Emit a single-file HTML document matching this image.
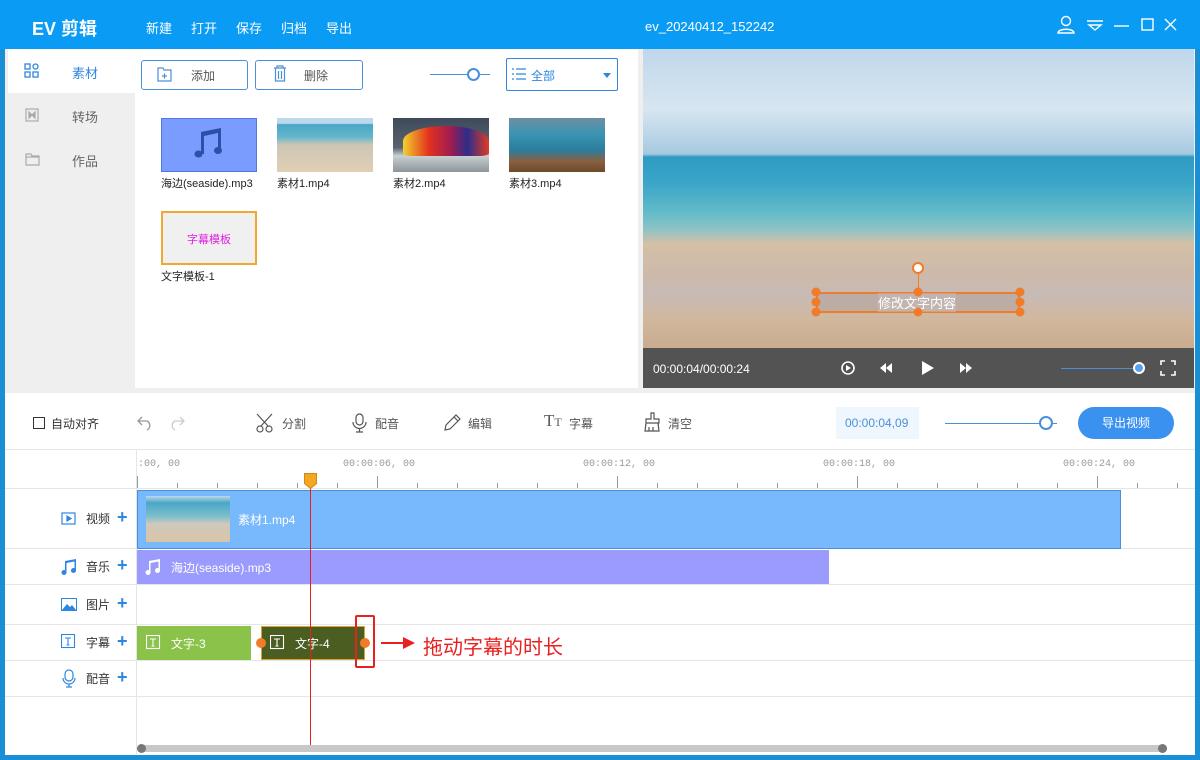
<!DOCTYPE html>
<html><head><meta charset="utf-8"><style>
*{margin:0;padding:0;box-sizing:border-box}
body{width:1200px;height:760px;position:relative;overflow:hidden;background:#1a8fd6;font-family:"Liberation Sans","Noto Sans CJK SC",sans-serif;font-size:12px;color:#333}
.a{position:absolute}
.tb{color:#fff;font-size:13px}
.btn{border:1px solid #4a90d9;border-radius:3px;background:#fff;color:#555;font-size:12px}
.tool{color:#555;font-size:12px}
.lbl{font-size:12px;color:#333}
.plus{color:#2e86de;font-size:18px;font-weight:bold}
.hl{height:1px;background:#e6e6e6}
</style></head><body>
<div class="a" style="left:0;top:0;width:1200px;height:49px;background:#0a9cf5"></div>
<div class="a tb" style="left:32px;top:15px;font-size:18px;font-weight:bold">EV 剪辑</div>
<div class="a tb" style="left:146px;top:18px">新建</div>
<div class="a tb" style="left:191px;top:18px">打开</div>
<div class="a tb" style="left:236px;top:18px">保存</div>
<div class="a tb" style="left:281px;top:18px">归档</div>
<div class="a tb" style="left:326px;top:18px">导出</div>
<div class="a tb" style="left:645px;top:19px;font-size:13px">ev_20240412_152242</div>
<svg class="a" style="left:1050px;top:15px" width="140" height="22" fill="none" stroke="#fff" stroke-width="1.4">
<circle cx="16" cy="6" r="4.5"/><path d="M8 18c0-5 16-5 16 0z"/>
<path d="M37 6h16M39 10h12l-6 5z"/>
<path d="M64 11h15"/>
<rect x="92" y="4" width="11" height="11"/>
<path d="M115 4l11 11M126 4l-11 11"/></svg>
<div class="a" style="left:5px;top:49px;width:1190px;height:706px;background:#efefef"></div>
<div class="a" style="left:8px;top:49px;width:127px;height:44px;background:#fff"></div>
<svg class="a" style="left:24px;top:63px" width="18" height="16" fill="none" stroke="#2e86de" stroke-width="1.3"><rect x="1" y="1" width="5" height="5"/><rect x="1" y="9" width="5" height="5"/><rect x="9" y="9" width="5" height="5"/><circle cx="11.5" cy="3.5" r="2.5"/></svg>
<div class="a" style="left:72px;top:63px;color:#2e86de;font-size:13px">素材</div>
<svg class="a" style="left:25px;top:108px" width="16" height="14" fill="none" stroke="#aaa" stroke-width="1.2"><rect x="1" y="1" width="12" height="12"/><path d="M4 4l3 3-3 3zM10 4l-3 3 3 3z" fill="#aaa"/></svg>
<div class="a" style="left:72px;top:107px;color:#666;font-size:13px">转场</div>
<svg class="a" style="left:25px;top:152px" width="16" height="14" fill="none" stroke="#aaa" stroke-width="1.2"><path d="M1 2h5l1 2h7v9H1z M1 5h13"/></svg>
<div class="a" style="left:72px;top:151px;color:#666;font-size:13px">作品</div>
<div class="a" style="left:135px;top:49px;width:503px;height:339px;background:#fff"></div>
<div class="a btn" style="left:141px;top:60px;width:107px;height:30px"></div>
<svg class="a" style="left:157px;top:67px" width="16" height="15" fill="none" stroke="#4a90d9" stroke-width="1.2"><path d="M1 1h5l1 2h7v11H1z M5 9h5M7.5 6.5v5"/></svg>
<div class="a" style="left:191px;top:67px;color:#555">添加</div>
<div class="a btn" style="left:255px;top:60px;width:108px;height:30px"></div>
<svg class="a" style="left:273px;top:65px" width="14" height="17" fill="none" stroke="#4a90d9" stroke-width="1.2"><path d="M1 3h12M4 3V1h6v2M2.5 3v13h9V3M5.5 6v8M8.5 6v8"/></svg>
<div class="a" style="left:304px;top:67px;color:#555">删除</div>
<div class="a" style="left:430px;top:74px;width:60px;height:1px;background:#4a90d9"></div>
<div class="a" style="left:467px;top:68px;width:13px;height:13px;border:2px solid #4a90d9;border-radius:50%;background:#fff"></div>
<div class="a" style="left:506px;top:58px;width:112px;height:33px;border:1px solid #2e86de;border-radius:2px;background:#fff"></div>
<svg class="a" style="left:512px;top:68px" width="14" height="12" stroke="#2e86de" stroke-width="1.2"><path d="M0 1h2M4 1h10M0 6h2M4 6h10M0 11h2M4 11h10"/></svg>
<div class="a" style="left:531px;top:67px;color:#2e86de">全部</div>
<div class="a" style="left:603px;top:73px;border:4px solid transparent;border-top:5px solid #2e86de"></div>
<div class="a" style="left:161px;top:118px;width:96px;height:54px;background:#7b9cff;border:1px solid #5577dd"></div>
<svg class="a" style="left:191px;top:128px" width="34" height="32" fill="#2f4ea8"><path d="M10 4l20-4v22h-3V5L13 8v18h-3z"/><ellipse cx="7.5" cy="26" rx="4" ry="3.5"/><ellipse cx="27" cy="22.5" rx="4" ry="3.5"/></svg>
<div class="a" style="left:161px;top:175px;color:#222;font-size:11px">海边(seaside).mp3</div>
<div class="a" style="left:277px;top:118px;width:96px;height:54px;background:linear-gradient(#bcd8ea 0%,#bcd8ea 10%,#4aa6c6 12%,#63b7cc 35%,#cfc5b5 50%,#e0cfb5 100%)"></div>
<div class="a" style="left:277px;top:175px;color:#222;font-size:11px">素材1.mp4</div>
<div class="a" style="left:393px;top:118px;width:96px;height:54px;background:linear-gradient(#3e4a5a,#5a6270 55%,#c9d0d2 70%,#8c9599)"></div>
<div class="a" style="left:403px;top:126px;width:86px;height:30px;border-radius:50% 50% 10% 10%;background:linear-gradient(90deg,#f2d12a,#e2321e 30%,#a21c50 55%,#2c2d8a 75%,#e23a24)"></div>
<div class="a" style="left:393px;top:175px;color:#222;font-size:11px">素材2.mp4</div>
<div class="a" style="left:509px;top:118px;width:96px;height:54px;background:linear-gradient(#6d8fa0,#3a94b4 30%,#2c7c9c 60%,#8a6040 80%,#6b4a2c)"></div>
<div class="a" style="left:509px;top:175px;color:#222;font-size:11px">素材3.mp4</div>
<div class="a" style="left:161px;top:211px;width:96px;height:54px;background:#f0f0f0;border:2px solid #f0a830"></div>
<div class="a" style="left:187px;top:231px;color:#e020e0;font-size:11px">字幕模板</div>
<div class="a" style="left:161px;top:268px;color:#222;font-size:11px">文字模板-1</div>
<div class="a" style="left:643px;top:49px;width:551px;height:300px;background:linear-gradient(#bfd7ea 0%,#d7e6f1 20%,#a7c9e0 35%,#2f9ac4 36%,#3ba6c8 45%,#66bcc9 55%,#8dc3c5 60%,#d4c0a6 65%,#cdb9a9 75%,#c7bbb5 82%,#d1b79e 90%,#c9ac8e 100%)"></div>
<div class="a" style="left:816px;top:292px;width:204px;height:21px;border:2px solid #f07c2a;background:rgba(160,150,150,.35)"></div>
<div class="a" style="left:878px;top:293px;color:#fff;font-size:13px;background:rgba(200,190,190,.5)">修改文字内容</div>
<div class="a" style="left:918px;top:272px;width:1px;height:20px;background:#f07c2a"></div>
<div class="a" style="left:912px;top:262px;width:12px;height:12px;border:2.5px solid #f07c2a;border-radius:50%;background:#fff"></div>
<svg class="a" style="left:808px;top:284px" width="220" height="36" fill="#f07c2a"><circle cx="8" cy="8" r="4.5"/><circle cx="8" cy="18" r="4.5"/><circle cx="8" cy="28" r="4.5"/><circle cx="110" cy="8" r="4.5"/><circle cx="110" cy="28" r="4.5"/><circle cx="212" cy="8" r="4.5"/><circle cx="212" cy="18" r="4.5"/><circle cx="212" cy="28" r="4.5"/></svg>
<div class="a" style="left:643px;top:348px;width:551px;height:40px;background:#535353"></div>
<div class="a" style="left:653px;top:362px;color:#fff;font-size:12px">00:00:04/00:00:24</div>
<svg class="a" style="left:838px;top:358px" width="150" height="20" fill="#fff" stroke="#fff"><circle cx="10" cy="10" r="6" fill="none" stroke-width="1.6"/><path d="M8 7l5 3-5 3z" stroke="none"/><path d="M42 10l6-5v10zM48 10l6-5v10z" stroke="none"/><path d="M84 3l12 7-12 7z" stroke="none"/><path d="M122 5l6 5-6 5zM128 5l6 5-6 5z" stroke="none"/></svg>
<div class="a" style="left:1061px;top:368px;width:78px;height:1px;background:#4a90d9"></div>
<div class="a" style="left:1133px;top:362px;width:12px;height:12px;border-radius:50%;background:#5aa0f0;border:2px solid #fff"></div>
<svg class="a" style="left:1160px;top:360px" width="16" height="16" fill="none" stroke="#fff" stroke-width="1.6"><path d="M1 5V1h4M11 1h4v4M15 11v4h-4M5 15H1v-4"/></svg>
<div class="a" style="left:5px;top:393px;width:1190px;height:362px;background:#fff"></div>
<div class="a" style="left:33px;top:417px;width:12px;height:12px;border:1px solid #333"></div>
<div class="a lbl" style="left:51px;top:415px">自动对齐</div>
<svg class="a" style="left:136px;top:413px" width="60" height="20" fill="none" stroke="#999" stroke-width="1.3"><path d="M6 4L2 8l4 4M2 8h9a5 5 0 010 9"/><path d="M44 4l4 4-4 4M48 8h-9a5 5 0 000 9" stroke="#ccc"/></svg>
<svg class="a" style="left:256px;top:413px" width="20" height="20" fill="none" stroke="#555" stroke-width="1.2"><circle cx="4" cy="16" r="3"/><circle cx="13" cy="16" r="3"/><path d="M5 13L16 1M12 13L1 1"/></svg>
<div class="a tool" style="left:282px;top:415px">分割</div>
<svg class="a" style="left:352px;top:413px" width="16" height="20" fill="none" stroke="#555" stroke-width="1.2"><rect x="4" y="1" width="7" height="11" rx="3.5"/><path d="M1 9a6.5 6.5 0 0013 0M7.5 15v4M4 19h7"/></svg>
<div class="a tool" style="left:375px;top:415px">配音</div>
<svg class="a" style="left:442px;top:413px" width="20" height="20" fill="none" stroke="#555" stroke-width="1.2"><path d="M3 17l1-5L14 2l4 4L8 16zM12 4l4 4"/></svg>
<div class="a tool" style="left:468px;top:415px">编辑</div>
<div class="a" style="left:544px;top:411px;color:#555;font-size:17px;font-family:'Liberation Serif',serif">T<span style="font-size:12px">T</span></div>
<div class="a tool" style="left:569px;top:415px">字幕</div>
<svg class="a" style="left:643px;top:412px" width="20" height="20" fill="none" stroke="#555" stroke-width="1.2"><path d="M8 1h3v6h5v4H3V7h5zM3 11l-1 8h14l-1-8M6 15v4M10 15v4"/></svg>
<div class="a tool" style="left:668px;top:415px">清空</div>
<div class="a" style="left:836px;top:407px;width:83px;height:32px;background:#f0f6fd"></div>
<div class="a" style="left:845px;top:416px;color:#4a90d9;font-size:12px">00:00:04,09</div>
<div class="a" style="left:945px;top:423px;width:112px;height:1px;background:#4a90d9"></div>
<div class="a" style="left:1039px;top:416px;width:14px;height:14px;border:2px solid #4a90d9;border-radius:50%;background:#fff"></div>
<div class="a" style="left:1078px;top:407px;width:96px;height:32px;border-radius:16px;background:#3a91f0;color:#fff;font-size:12px;text-align:center;line-height:32px">导出视频</div>
<div class="a hl" style="left:5px;top:449px;width:1190px"></div>
<div class="a" style="left:136px;top:449px;width:1px;height:306px;background:#e6e6e6"></div>
<div class="a" style="left:138px;top:459px;color:#999;font-size:10px;font-family:'Liberation Mono',monospace">:00, 00</div>
<div class="a" style="left:343px;top:459px;color:#999;font-size:10px;font-family:'Liberation Mono',monospace">00:00:06, 00</div>
<div class="a" style="left:583px;top:459px;color:#999;font-size:10px;font-family:'Liberation Mono',monospace">00:00:12, 00</div>
<div class="a" style="left:823px;top:459px;color:#999;font-size:10px;font-family:'Liberation Mono',monospace">00:00:18, 00</div>
<div class="a" style="left:1063px;top:459px;color:#999;font-size:10px;font-family:'Liberation Mono',monospace">00:00:24, 00</div>
<svg class="a" style="left:136px;top:476px" width="1060" height="13" stroke="#999" stroke-width="1">
<path d="M1.5 0v12M241.5 0v12M481.5 0v12M721.5 0v12M961.5 0v12"/>
<path d="M41.5 7v5M81.5 7v5M121.5 7v5M161.5 7v5M201.5 7v5 M281.5 7v5M321.5 7v5M361.5 7v5M401.5 7v5M441.5 7v5 M521.5 7v5M561.5 7v5M601.5 7v5M641.5 7v5M681.5 7v5 M761.5 7v5M801.5 7v5M841.5 7v5M881.5 7v5M921.5 7v5 M1001.5 7v5M1041.5 7v5"/></svg>
<div class="a hl" style="left:5px;top:488px;width:1190px"></div>
<div class="a hl" style="left:5px;top:548px;width:1190px"></div>
<div class="a hl" style="left:5px;top:584px;width:1190px"></div>
<div class="a hl" style="left:5px;top:624px;width:1190px"></div>
<div class="a hl" style="left:5px;top:660px;width:1190px"></div>
<div class="a hl" style="left:5px;top:696px;width:1190px"></div>
<svg class="a" style="left:61px;top:512px" width="16" height="13" fill="none" stroke="#2e86de" stroke-width="1.2"><rect x="1" y="1" width="13" height="11"/><path d="M6 4l4 2.5L6 9z" fill="#2e86de"/></svg>
<div class="a lbl" style="left:86px;top:510px">视频</div><div class="a plus" style="left:117px;top:507px">+</div>
<svg class="a" style="left:61px;top:558px" width="16" height="17" fill="#2e86de"><path d="M4 3l11-2v12h-1.5V3.5L5.5 5v10H4z"/><circle cx="3" cy="14.5" r="2.5"/><circle cx="12.5" cy="12.5" r="2.5"/></svg>
<div class="a lbl" style="left:86px;top:558px">音乐</div><div class="a plus" style="left:117px;top:555px">+</div>
<svg class="a" style="left:61px;top:598px" width="17" height="14"><rect x="0.5" y="0.5" width="15" height="12" fill="none" stroke="#2e86de"/><path d="M1 12l5-6 3 3 2-2 4 5z" fill="#2e86de"/></svg>
<div class="a lbl" style="left:86px;top:596px">图片</div><div class="a plus" style="left:117px;top:593px">+</div>
<svg class="a" style="left:61px;top:634px" width="15" height="15" fill="none" stroke="#2e86de" stroke-width="1.1"><rect x="0.5" y="0.5" width="13" height="13"/><path d="M4 4h6M7 4v7M5.5 11h3"/></svg>
<div class="a lbl" style="left:86px;top:634px">字幕</div><div class="a plus" style="left:117px;top:631px">+</div>
<svg class="a" style="left:62px;top:669px" width="14" height="19" fill="none" stroke="#2e86de" stroke-width="1.2"><rect x="3" y="1" width="8" height="11" rx="4"/><path d="M1 9a6 6 0 0012 0M7 15v3M4 18h6"/></svg>
<div class="a lbl" style="left:86px;top:670px">配音</div><div class="a plus" style="left:117px;top:667px">+</div>
<div class="a" style="left:137px;top:490px;width:984px;height:59px;background:#78b9fd;border:1px solid #4a90d9"></div>
<div class="a" style="left:146px;top:496px;width:84px;height:46px;background:linear-gradient(#bcd8ea 0%,#4aa6c6 15%,#7ec0cc 45%,#cfc8bc 60%,#d9c5a6 100%)"></div>
<div class="a" style="left:238px;top:511px;color:#fff;font-size:12px">素材1.mp4</div>
<div class="a" style="left:137px;top:550px;width:692px;height:34px;background:#9b9bfd"></div>
<svg class="a" style="left:145px;top:558px" width="16" height="17" fill="#fff"><path d="M4 3l11-2v12h-1.5V3.5L5.5 5v10H4z"/><circle cx="3" cy="14.5" r="2.5"/><circle cx="12.5" cy="12.5" r="2.5"/></svg>
<div class="a" style="left:171px;top:559px;color:#fff;font-size:12px">海边(seaside).mp3</div>
<div class="a" style="left:137px;top:626px;width:114px;height:34px;background:#8bc34a"></div>
<svg class="a" style="left:146px;top:635px" width="15" height="15" fill="none" stroke="#fff" stroke-width="1.1"><rect x="0.5" y="0.5" width="13" height="13"/><path d="M4 4h6M7 4v7M5.5 11h3"/></svg>
<div class="a" style="left:171px;top:635px;color:#fff;font-size:12px">文字-3</div>
<div class="a" style="left:261px;top:626px;width:104px;height:34px;background:#4a5e22;border:1px solid #e0a030"></div>
<svg class="a" style="left:270px;top:635px" width="15" height="15" fill="none" stroke="#fff" stroke-width="1.1"><rect x="0.5" y="0.5" width="13" height="13"/><path d="M4 4h6M7 4v7M5.5 11h3"/></svg>
<div class="a" style="left:295px;top:635px;color:#fff;font-size:12px">文字-4</div>
<div class="a" style="left:256px;top:638px;width:10px;height:10px;border-radius:50%;background:#f07c2a"></div>
<div class="a" style="left:360px;top:638px;width:10px;height:10px;border-radius:50%;background:#f07c2a"></div>
<div class="a" style="left:355px;top:615px;width:20px;height:53px;border:2.5px solid #e82020;border-radius:2px"></div>
<svg class="a" style="left:381px;top:636px" width="36" height="14"><path d="M0 7h26" stroke="#e82020" stroke-width="2"/><path d="M22 1l12 6-12 6z" fill="#e82020"/></svg>
<div class="a" style="left:423px;top:631px;color:#e82020;font-size:20px">拖动字幕的时长</div>
<div class="a" style="left:310px;top:480px;width:1px;height:265px;background:#e82020"></div>
<svg class="a" style="left:304px;top:473px" width="13" height="16"><path d="M0.5 0.5h12v10l-6 5-6-5z" fill="#f5a623" stroke="#d08a10"/></svg>
<div class="a" style="left:140px;top:745px;width:1027px;height:7px;background:#c8c8c8;border-radius:3px"></div>
<div class="a" style="left:137px;top:744px;width:9px;height:9px;border-radius:50%;background:#777"></div>
<div class="a" style="left:1158px;top:744px;width:9px;height:9px;border-radius:50%;background:#777"></div>
</body></html>
